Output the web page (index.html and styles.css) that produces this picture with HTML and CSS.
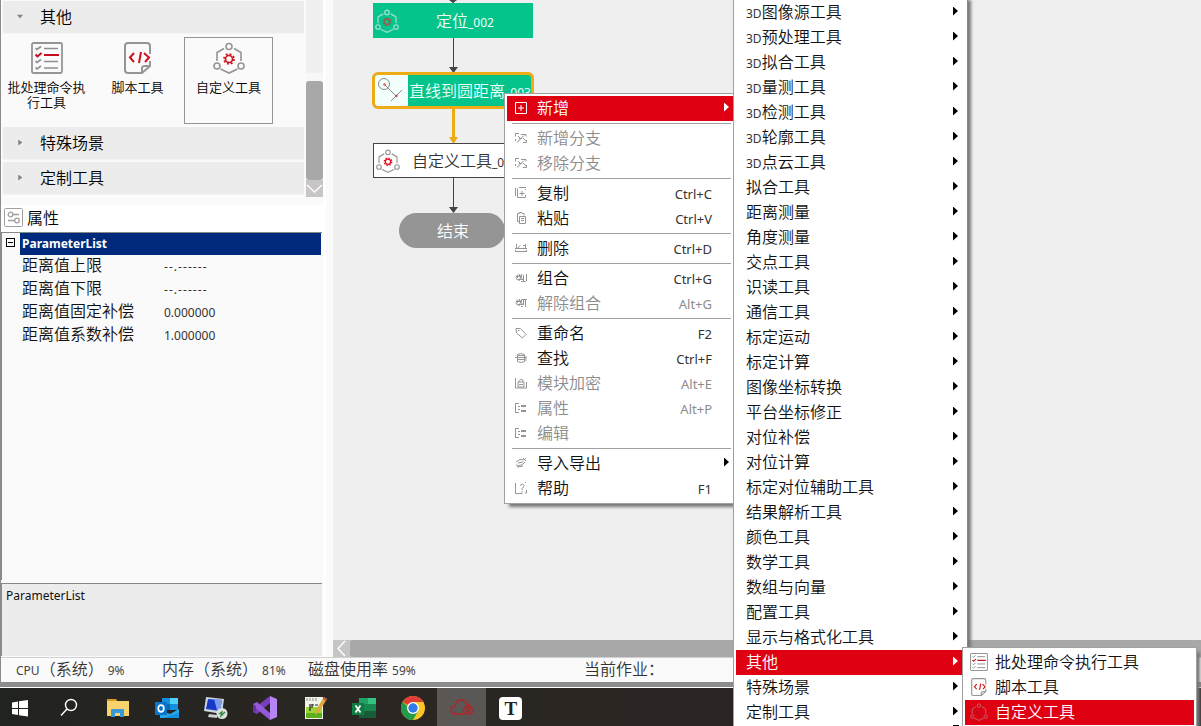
FILE: index.html
```html
<!DOCTYPE html>
<html lang="zh-CN">
<head>
<meta charset="utf-8">
<title>流程编辑</title>
<link rel="stylesheet" href="styles.css">
</head>
<body>
<svg class="defs" width="0" height="0">
  <symbol id="i-list" viewBox="0 0 32 32"><rect x="1" y="1" width="30" height="30" rx="1.500" fill="none" stroke="#959595" stroke-width="1.800"/><g fill="none" stroke="#8f8f8f" stroke-width="1.700"><path d="M13 6.500h14M13 19.500h14M13 26h14"/><path d="M4.500 6l1.500 1.500 4-3M4.500 19l1.500 1.500 4-3M4.500 25.500l1.500 1.500 4-3"/></g><path d="M13 13h15M4.500 12.500l2 2 4-3.500" fill="none" stroke="#c8101c" stroke-width="2"/></symbol>
  <symbol id="i-script" viewBox="0 0 28 32"><path d="M26 12V4q0-3-3-3H4Q1 1 1 4v24q0 3 3 3h14l8-7v-5M18 31v-5q0-2 3-2h5" fill="none" stroke="#959595" stroke-width="2"/><path d="M10 11l-4 4.500 4 4.500M20 11l5 4.500-4 4.500M17 10l-2 11" fill="none" stroke="#d0101c" stroke-width="2"/></symbol>
  <symbol id="i-hex" viewBox="0 0 32 32"><g fill="none" stroke="currentColor" stroke-width="1.600"><circle cx="16" cy="4.500" r="3"/><circle cx="4" cy="24" r="3"/><circle cx="28" cy="24" r="3"/><path d="M11 6.500L4 10.500V19M21 6.500l7 4V19M7.500 27l8.500 4 8.500-4"/></g></symbol>
  <symbol id="i-gear" viewBox="0 0 32 32"><circle cx="16" cy="17" r="3.500" fill="none" stroke="currentColor" stroke-width="1.600"/><circle cx="16" cy="17" r="5" fill="none" stroke="currentColor" stroke-width="1.700" stroke-dasharray="1.960 1.960"/></symbol>
  <symbol id="i-branch" viewBox="0 0 12 12"><path d="M4 1.500H.5v3M.5 7v2M3 9.500l6-6M6 2.500h5v2M3 4l3 3M4 6.500h3M8 6l3 3M2 10.500l2-2M8 10.500h3.500V8" fill="none" stroke="currentColor"/></symbol>
  <symbol id="i-copy" viewBox="0 0 12 12"><path d="M2.500 1.500v9h8M4 .5h7M.5 1v8M10.500 2v1M10.500 8v2M7 4v5M4.500 6.500h5" fill="none" stroke="currentColor"/></symbol>
  <symbol id="i-paste" viewBox="0 0 12 12"><path d="M4.500 9.500h-2v-8h2M4 .5h3M7 1.500h2v2M4.500 4.500h6v7h-6zM6 6.500h3M6 8.500h3" fill="none" stroke="currentColor"/></symbol>
  <symbol id="i-del" viewBox="0 0 12 12"><path d="M1.500 2v4M10.500 2v4M0 6.500h12M.5 9.500h11M.5 8v2M11.500 8v2M5 3.500L3 6M8 3.500h2" fill="none" stroke="currentColor"/></symbol>
  <symbol id="i-group" viewBox="0 0 12 12"><path d="M3.500 3a2.500 2.500 0 1 0 .1 5M4 2l4 6M2 6l3-3M7 2L4 9M8.500 3v6M11.500 2v7M6 9.500h5M2 4.500h5M3 7.500h4" fill="none" stroke="currentColor"/></symbol>
  <symbol id="i-ungroup" viewBox="0 0 12 12"><path d="M3.500 3a2.500 2.500 0 1 0 .1 5M4 2l4 6M2 6l3-3M7 2L4 9M8.500 2v6M7 2.500h5M10.500 3v7M6 9.500h2M2 4.500h5M3 7.500h4" fill="none" stroke="currentColor"/></symbol>
  <symbol id="i-tag" viewBox="0 0 12 12"><path d="M1 1.500h4.500l5.500 6L7.500 11 1.500 6zM3 3.500h1.500" fill="none" stroke="currentColor"/></symbol>
  <symbol id="i-find" viewBox="0 0 12 12"><path d="M2.500 2.500q3-2 7 0v7q-3 2-7 0zM0 5.500h11M3 3.500h6M3 7.500h6M11 4v5" fill="none" stroke="currentColor"/></symbol>
  <symbol id="i-lock" viewBox="0 0 12 12"><path d="M.5 1v10h11V5M3 10V5h6v5zM4 5q0-3.500 4-2v2M4 7.500h4" fill="none" stroke="currentColor"/></symbol>
  <symbol id="i-prop" viewBox="0 0 12 12"><path d="M.5 1v10M0 1.500h4M0 10.500h4M3 4.500h2M3 7.500h2M6 3.500h5M6 4.500h5M6 8.500h5M6 9.500h5" fill="none" stroke="currentColor"/></symbol>
  <symbol id="i-io" viewBox="0 0 12 12"><path d="M1 5q4-4 8-2l2-2M1 8q5 2 9-3M3 6l5-1M2 10l6-1M8 1l3 3" fill="none" stroke="currentColor"/></symbol>
  <symbol id="i-help" viewBox="0 0 12 12"><path d="M.5 1v10.500h7M5 3.500q3-3 4 0 0 1.500-2 3v1.500M7 9v1.500M10 11h1.500V8M10 .5h1" fill="none" stroke="currentColor"/></symbol>
</svg>

<div class="app">
  <main class="work">
    <aside class="side">
      <div class="toolbox">
        <div class="groups">
          <div class="group"><i class="tri down"></i>其他</div>
          <div class="tools">
            <div class="tool t1"><svg width="32" height="32"><use href="#i-list"/></svg>批处理命令执<br>行工具</div>
            <div class="tool t2"><svg width="28" height="32"><use href="#i-script"/></svg>脚本工具</div>
            <div class="tool t3"><svg width="32" height="32"><use href="#i-hex" color="#959595"/><use href="#i-gear" color="#d0101c"/></svg>自定义工具</div>
          </div>
          <div class="group"><i class="tri"></i>特殊场景</div>
          <div class="group"><i class="tri"></i>定制工具</div>
        </div>
        <div class="vscroll"><div class="thumb"></div><div class="btn"><svg width="17" height="17"><path d="M1 5l7.500 7L16 5" fill="none" stroke="#fff" stroke-width="1.400"/></svg></div></div>
      </div>
      <div class="prop-title">
        <svg width="19" height="19" viewBox="0 0 19 19" fill="none" stroke="#a0a0a0"><rect x=".5" y=".5" width="18" height="18" rx="1"/><circle cx="6.500" cy="6.500" r="2.300" stroke-width="1.300"/><circle cx="13" cy="12.500" r="2.300" stroke-width="1.300"/><path d="M9 6.500h6M4 12.500h6.500" stroke-width="1.500"/></svg><span>属性</span></div>
      <div class="grid">
        <div class="cat"><i class="box"></i><b>ParameterList</b></div>
        <div class="row"><span>距离值上限</span><em class="dash">--.------</em></div>
        <div class="row"><span>距离值下限</span><em class="dash">--.------</em></div>
        <div class="row"><span>距离值固定补偿</span><em>0.000000</em></div>
        <div class="row"><span>距离值系数补偿</span><em>1.000000</em></div>
      </div>
      <div class="desc">ParameterList</div>
    </aside>

    <section class="canvas">
      <svg class="wires" width="300" height="260" viewBox="333 0 300 260">
        <path d="M453.500 0v3M453.500 38v32M453.500 178v32" stroke="#444"/>
        <path d="M449 0h8l-4 3zM449 67h9l-4.500 6zM449 207h9l-4.500 6z" fill="#444"/>
        <path d="M453.500 109v32" stroke="#efab15" stroke-width="3"/><path d="M449 137h9l-4.500 7z" fill="#efab15"/>
      </svg>
      <div class="node n1"><svg width="24" height="24"><use href="#i-hex" color="#a5ded0"/><use href="#i-gear" color="#a85345"/></svg><span>定位<small>_002</small></span></div>
      <div class="node n2"><svg width="33" height="31" viewBox="375 75 33 31" fill="none" stroke="#888"><circle cx="384" cy="84" r="5.500"/><path d="M385 85l11 11M391 101l11-11"/><circle cx="384.500" cy="84.500" r=".8" stroke="#d22"/><circle cx="396.500" cy="96" r=".8" stroke="#d22"/></svg><span>直线到圆距离<small>_003</small></span></div>
      <div class="node n3"><svg width="24" height="24"><use href="#i-hex" color="#999"/><use href="#i-gear" color="#e01020"/></svg><span>自定义工具<small>_004</small></span></div>
      <div class="node n4">结束</div>
      <div class="hscroll"><svg width="17" height="17"><path d="M12 1L5 8.500l7 7.500" fill="none" stroke="#fff" stroke-width="1.400"/></svg><div class="hthumb"></div></div>
    </section>
  </main>

  <footer class="status">
    <span class="s1"><small>CPU</small>（系统）<small>9%</small></span>
    <span class="s2">内存（系统）<small>81%</small></span>
    <span class="s3">磁盘使用率<small>59%</small></span>
    <span class="s4">当前作业：</span>
  </footer>
</div>

<div class="taskbar">
  <div class="task"><svg width="24" height="24"><path d="M4 6.500l6-1V12H4zM11 5.300L20 4v8h-9zM4 13h6v6l-6-1zM11 13h9v7.500l-9-1.300z" fill="#fff"/></svg></div>
  <div class="task"><svg width="24" height="24"><circle cx="14" cy="9" r="5.500" fill="none" stroke="#fff" stroke-width="1.400"/><path d="M10 13l-6 6.500" stroke="#fff" stroke-width="1.500"/></svg></div>
  <div class="task"><svg width="24" height="24"><path d="M1 3h9l1.500 2H1z" fill="#d99a21"/><path d="M1 5h22v15H1z" fill="#f8d36c"/><path d="M5 20v-6q0-1 1-1h11q1 0 1 1v7h-4v-4h-5v4H5z" fill="#3a98d8"/></svg></div>
  <div class="task"><svg width="24" height="24"><path d="M7 2h16v12H7z" fill="#1590df"/><path d="M15 2h8v6h-8z" fill="#50d0ff"/><path d="M7 8h8v6H7z" fill="#0868b8"/><path d="M5 14l10 4 9-5v9H5z" fill="#28a8ea"/><path d="M8 22l16-5v5z" fill="#1490df"/><path d="M0 6h12v13H0z" fill="#0875ca"/><ellipse cx="6" cy="12.500" rx="2.800" ry="3.300" fill="none" stroke="#fff" stroke-width="1.700"/></svg></div>
  <div class="task"><svg width="24" height="24"><path d="M2 1l18 2-2 15-18-3z" fill="#cdd3dc"/><path d="M4 3l14 1-2 11L2 13z" fill="#1838c8"/><path d="M10 3l8 1-2 11-3-1z" fill="#7b9cf0"/><path d="M5 18l8 1v3l-9-1z" fill="#cdd0d4"/><circle cx="18" cy="17.500" r="5.500" fill="#dce0dc"/><path d="M15 18l3-2-1 4 4-4" stroke="#288838" fill="none" stroke-width="1.300"/></svg></div>
  <div class="task"><svg width="24" height="24"><path d="M17 0l7 3v18l-7 3z" fill="#b784f5"/><path d="M17 0v7L4 18l-4-2v-3z" fill="#7840b8"/><path d="M0 8l4-2 13 11v7L0 10z" fill="#9458d8"/><path d="M0 8l3 2v5l-3 1z" fill="#6732a8"/></svg></div>
  <div class="task"><svg width="24" height="24"><path d="M2 1h18v22H2z" fill="#f0f5e8"/><path d="M3 11h16v11H3z" fill="#9bd637"/><path d="M3 17h16v5H3z" fill="#5fae20"/><path d="M4 2v3M7 2v3M10 2v3M13 2v3" stroke="#888"/><path d="M7 8v7M9 9h2M12 9h3M9 8v4" stroke="#222" stroke-width="1.200"/><path d="M21 1l3 2-8 13-4 3 1-5z" fill="#dca93c"/><path d="M21 1l3 2-1 2-3-2z" fill="#b45a48"/></svg></div>
  <div class="task"><svg width="24" height="24"><path d="M7 2h17v20H7z" fill="#188850"/><path d="M16 2h8v6h-8z" fill="#34c481"/><path d="M7 2h9v6H7z" fill="#21a366"/><path d="M7 15h17v7H7z" fill="#185c37"/><path d="M0 7h12v12H0z" fill="#107c41"/><path d="M3.500 9.500l5 7M8.500 9.500l-5 7" stroke="#fff" stroke-width="1.800"/></svg></div>
  <div class="task"><svg width="24" height="24"><circle cx="12" cy="12" r="12" fill="#fbc823"/><path d="M12 12L1.600 6A12 12 0 0 1 22.400 6H12z" fill="#df3e32"/><path d="M1.600 6A12 12 0 0 0 12 24l5.200-9H12z" fill="#239b4a"/><circle cx="12" cy="12" r="6" fill="#fff"/><circle cx="12" cy="12" r="4.700" fill="#327be8"/></svg></div>
  <div class="task on"><svg width="24" height="24" fill="none" stroke="#b92128" stroke-width="1.400"><path d="M13 18H5q-4-1-4-4t4-4q1-6 6-6t6 5q3 0 3 2"/><ellipse cx="18.500" cy="14.500" rx="5" ry="3.500"/><circle cx="18.500" cy="14.500" r="1.500"/></svg></div>
  <div class="task"><span class="tile">T</span></div>
</div>

<div class="menu m1">
  <div class="item hot"><svg width="12" height="12"><path d="M.5.5h11v11H.5zM6 3v6M3 6h6" fill="none" stroke="#fff"/></svg>新增<i class="arr"></i></div><hr>
  <div class="item off"><svg width="12" height="12"><use href="#i-branch"/></svg>新增分支</div>
  <div class="item off"><svg width="12" height="12"><use href="#i-branch"/></svg>移除分支</div><hr>
  <div class="item"><svg width="12" height="12"><use href="#i-copy"/></svg>复制<kbd>Ctrl+C</kbd></div>
  <div class="item"><svg width="12" height="12"><use href="#i-paste"/></svg>粘贴<kbd>Ctrl+V</kbd></div><hr>
  <div class="item"><svg width="12" height="12"><use href="#i-del"/></svg>删除<kbd>Ctrl+D</kbd></div><hr>
  <div class="item"><svg width="12" height="12"><use href="#i-group"/></svg>组合<kbd>Ctrl+G</kbd></div>
  <div class="item off"><svg width="12" height="12"><use href="#i-ungroup"/></svg>解除组合<kbd>Alt+G</kbd></div><hr>
  <div class="item"><svg width="12" height="12"><use href="#i-tag"/></svg>重命名<kbd>F2</kbd></div>
  <div class="item"><svg width="12" height="12"><use href="#i-find"/></svg>查找<kbd>Ctrl+F</kbd></div>
  <div class="item off"><svg width="12" height="12"><use href="#i-lock"/></svg>模块加密<kbd>Alt+E</kbd></div>
  <div class="item off"><svg width="12" height="12"><use href="#i-prop"/></svg>属性<kbd>Alt+P</kbd></div>
  <div class="item off"><svg width="12" height="12"><use href="#i-prop"/></svg>编辑</div><hr>
  <div class="item"><svg width="12" height="12"><use href="#i-io"/></svg>导入导出<i class="arr"></i></div>
  <div class="item"><svg width="12" height="12"><use href="#i-help"/></svg>帮助<kbd>F1</kbd></div>
</div>

<div class="menu m2">
  <div class="item"><small>3D</small>图像源工具<i class="arr"></i></div>
  <div class="item"><small>3D</small>预处理工具<i class="arr"></i></div>
  <div class="item"><small>3D</small>拟合工具<i class="arr"></i></div>
  <div class="item"><small>3D</small>量测工具<i class="arr"></i></div>
  <div class="item"><small>3D</small>检测工具<i class="arr"></i></div>
  <div class="item"><small>3D</small>轮廓工具<i class="arr"></i></div>
  <div class="item"><small>3D</small>点云工具<i class="arr"></i></div>
  <div class="item">拟合工具<i class="arr"></i></div>
  <div class="item">距离测量<i class="arr"></i></div>
  <div class="item">角度测量<i class="arr"></i></div>
  <div class="item">交点工具<i class="arr"></i></div>
  <div class="item">识读工具<i class="arr"></i></div>
  <div class="item">通信工具<i class="arr"></i></div>
  <div class="item">标定运动<i class="arr"></i></div>
  <div class="item">标定计算<i class="arr"></i></div>
  <div class="item">图像坐标转换<i class="arr"></i></div>
  <div class="item">平台坐标修正<i class="arr"></i></div>
  <div class="item">对位补偿<i class="arr"></i></div>
  <div class="item">对位计算<i class="arr"></i></div>
  <div class="item">标定对位辅助工具<i class="arr"></i></div>
  <div class="item">结果解析工具<i class="arr"></i></div>
  <div class="item">颜色工具<i class="arr"></i></div>
  <div class="item">数学工具<i class="arr"></i></div>
  <div class="item">数组与向量<i class="arr"></i></div>
  <div class="item">配置工具<i class="arr"></i></div>
  <div class="item">显示与格式化工具<i class="arr"></i></div>
  <div class="item hot">其他<i class="arr"></i></div>
  <div class="item">特殊场景<i class="arr"></i></div>
  <div class="item">定制工具<i class="arr"></i></div>
  <i class="more"></i>
</div>

<div class="menu m3">
  <div class="item"><svg width="18" height="18"><use href="#i-list"/></svg>批处理命令执行工具</div>
  <div class="item"><svg width="18" height="18"><use href="#i-script"/></svg>脚本工具</div>
  <div class="item hot"><svg width="18" height="18"><use href="#i-hex" color="#b87070"/><use href="#i-gear" color="#c40820"/></svg>自定义工具</div>
</div>
</body>
</html>
```

FILE: styles.css
```css
* { box-sizing: border-box; }
body { margin: 0; width: 1201px; height: 726px; overflow: hidden; position: relative; background: #fff; color: #111; font: 350 16px/22px "Noto Sans CJK SC", sans-serif; white-space: nowrap; }
svg { display: block; flex: none; }
.defs { position: absolute; }
small, kbd, em, .desc, .cat { font-family: "Noto Sans", sans-serif; font-size: 12px; font-style: normal; font-weight: 400; }
small { color: #444; }

.app { height: 687px; border-bottom: 5px solid #8c8c8c; border-left: 1px solid #8c8c8c; display: flex; flex-direction: column; background: #fafafa; }
.work { height: 657px; display: flex; }

/* left column */
.side { width: 322px; height: 657px; margin-right: 10px; box-shadow: 3px 0 #fff; display: flex; flex-direction: column; }
.toolbox { height: 205px; display: flex; justify-content: space-between; }
.groups { width: 301px; margin: 1px 0 0 2px; color: #000; }
.group { height: 33px; margin-bottom: 2px; padding: 0 0 2px 14px; background: #ececec; border-bottom: 1px solid #f4f4f4; display: flex; align-items: center; gap: 17px; }
.tri { width: 6px; height: 6px; margin-top: 1px; background: #858585; clip-path: polygon(20% 0, 90% 50%, 20% 100%); }
.tri.down { clip-path: polygon(0 20%, 100% 20%, 50% 85%); }
.tools { height: 91px; display: flex; }
.tool { width: 89px; height: 87px; margin-top: 1px; padding-top: 4px; border: 1px solid transparent; font-size: 13px; line-height: 15px; color: #000; text-align: center; }
.tool svg { margin: 0 auto 5px; }
.t1 { margin-left: -1px; }
.t2 { margin-left: 2px; }
.t3 { margin-left: 2px; border-color: #959595; }
.vscroll { width: 17px; height: 197px; padding-top: 81px; background: linear-gradient(#f0f0f0 73px, #f7f7f7 73px); }
.thumb { height: 99px; background: #a8a8a8; border-radius: 3px; }
.btn { height: 17px; background: #c8c5c7; }
.prop-title { height: 27px; background: #fff; display: flex; align-items: center; gap: 4px; padding: 0 0 2px 3px; color: #000; }
.prop-title span { padding-bottom: 2px; }
.grid { width: 321px; height: 348px; border-top: 1px solid #888; border-left: 1px solid #888; }
.cat { height: 22px; display: flex; padding-left: 4px; color: #fff; }
.cat b { margin-left: 5px; width: 301px; padding-left: 2px; background: #002a7b; line-height: 21px; font-weight: 700; }
.box { width: 9px; height: 9px; margin-top: 5px; border: 1px solid #000; background: linear-gradient(#000, #000) center / 5px 1px no-repeat; }
.row { height: 23px; display: flex; padding-left: 20px; line-height: 19px; }
.row span { width: 142px; }
.row em { line-height: 23px; color: #333; }
.dash { letter-spacing: 1.050px; }
.desc { width: 321px; height: 73px; margin-top: 3px; border-top: 1px solid #888; border-left: 1px solid #888; background: #ececec; padding: 1px 4px; }

/* flow canvas */
.canvas { flex: 1; position: relative; background: #efefef; }
.wires { position: absolute; left: 0; top: 0; }
.node { position: absolute; left: 40px; width: 160px; height: 35px; display: flex; align-items: center; color: #333; overflow: hidden; }
.node small { color: inherit; }
.n1 { top: 3px; background: #04c48c; color: #f0fff8; padding-left: 2px; gap: 37px; }
.n1 span { padding-top: 2px; }
.n2 { left: 39px; top: 72px; width: 162px; height: 37px; border: 3px solid #efab15; border-radius: 6px; background: #04c48c; color: #f0fff8; gap: 1px; }
.n2 span { padding-top: 1px; }
.n2 svg { background: #f3fffb; }
.n3 { top: 143px; background: #fff; border: 1px solid #444; padding-left: 2px; gap: 12px; }
.n3 span { padding-top: 1px; }
.n4 { left: 66px; top: 213px; width: 106px; padding: 0 0 2px 2px; border-radius: 18px; background: #959595; color: #fff; justify-content: center; }
.hscroll { position: absolute; left: 0; right: 0; bottom: 0; height: 17px; display: flex; background: #c5c5c5; }
.hthumb { flex: 1; background: #a8a8a8; border-radius: 3px 0 0 3px; }

.status { height: 25px; border-top: 1px solid #d0d0d0; display: flex; color: #333; }
.status span { line-height: 21px; }
.s1 { margin-left: 15px; width: 146px; }
.s1 small:last-child, .s2 small, .s3 small { margin-left: 4px; }
.s2 { width: 146px; }
.s3 { width: 276px; }

.taskbar { height: 38px; margin-top: 1px; display: flex; background: linear-gradient(90deg, #21231f, #2a2622 300px, #292422); }
.task { width: 49.100px; display: flex; align-items: center; justify-content: center; padding: 2px 0 0 1px; }
.task:first-child { width: 44px; padding: 2px 4px 0 0; }
.task.on { background: #5a5755; }
.tile { width: 23px; height: 23px; border-radius: 4px; background: #fff; color: #222; font: 19px/23px "Liberation Serif", serif; font-weight: bold; text-align: center; }

/* context menus */
.menu { position: absolute; background: #fff; color: #111; }
.menu hr { height: 1px; border: 0; margin: 2px 2px 2px 5px; background: #a0a0a0; }
.item { height: 25px; display: flex; align-items: center; line-height: 23px; padding: 0 0 2px 10px; }
.item kbd { margin-left: auto; margin-right: 21px; font-size: 13px; padding-top: 4px; color: #333; }
.item.off, .item.off kbd { color: #8c8c8c; }
.item.hot { background: #df0012; color: #fff; }
.item small { padding-top: 3px; color: #333; }
.arr { width: 5px; height: 9px; margin: -1px 7px 0 auto; background: #000; clip-path: polygon(0 0, 100% 50%, 0 100%); }
.hot .arr { background: #fff; }
.m1 { left: 504px; top: 93px; width: 230px; height: 411px; border: 1px solid #a0a0a0; padding: 2px 0 0 2px; box-shadow: 4px 4px 3px -1px #777; }
.m1 .item { padding-left: 8px; }
.m1 .item svg { margin-right: 10px; color: #959595; }
.m1 .arr { margin-right: 4px; }
.m2 { left: 733px; top: 0; width: 235px; height: 726px; border-left: 1px solid #a0a0a0; border-right: 1px solid #888; padding: 0 2px; box-shadow: 3px 0 3px #777; }
.more { display: block; width: 6px; height: 2px; margin-left: 217px; background: #000; }
.m3 { left: 962px; top: 647px; width: 235px; height: 90px; border: 1px solid #a0a0a0; padding: 2px; box-shadow: 4px 4px 3px -1px #777; }
.m3 .item { padding-left: 5px; }
.m3 .item svg { margin-right: 7px; }
```
